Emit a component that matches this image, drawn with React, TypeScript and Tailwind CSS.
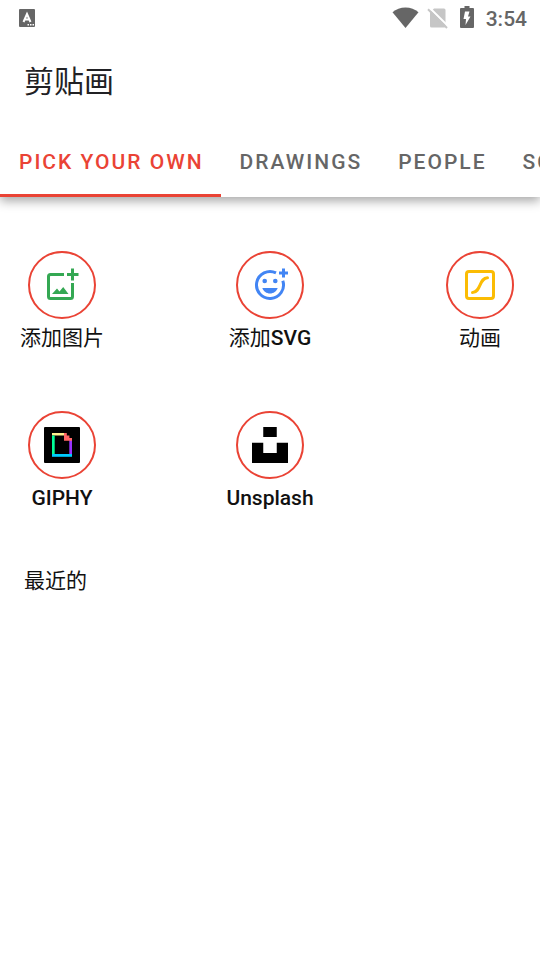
import type { ReactNode } from "react";
import clsx from "clsx";

const TABS = ["PICK YOUR OWN", "DRAWINGS", "PEOPLE", "SCIENCE"];

function StatusBar() {
  return (
    <div className="flex h-9 items-center justify-between pl-[19px] pr-3 text-[#666666]">
      <svg width="16" height="18" viewBox="0 0 16 18">
        <rect width="16" height="18" rx="1" fill="currentColor" />
        <path d="M4.5 13 8 5l3.5 8M5.8 10.5h4.4" fill="none" stroke="#fff" strokeWidth="2" />
        <path d="M8.500 15h1.500v1.500H8.500zM11 15h1.500v1.500H11zM13.500 15H15v1.500h-1.500z" fill="#fff" />
      </svg>
      <div className="flex items-center">
        <svg width="28" height="22" viewBox="0 0 28 22">
          <path d="M13.500 21 .5 5.200C4 2.200 8.500.5 13.500.5s9.500 1.700 13 4.700z" fill="currentColor" />
        </svg>
        <svg className="ml-1.5" width="24" height="24" viewBox="0 0 24 24">
          <path d="M8 2.500h10A1.500 1.500 0 0 1 19.500 4v16a1.500 1.500 0 0 1-1.500 1.500H5.500A1.500 1.500 0 0 1 4 20V6.500z" fill="#c6c6c6" />
          <path d="M3.500 1.800 22.500 20.500" stroke="#fff" strokeWidth="2" />
          <path d="M2 3.200 21 22" stroke="#c6c6c6" strokeWidth="2" />
        </svg>
        <svg className="mb-0.5 ml-2.5" width="14" height="22" viewBox="0 0 14 22">
          <path d="M4.500 0h5v2H13a1 1 0 0 1 1 1v18a1 1 0 0 1-1 1H1a1 1 0 0 1-1-1V3a1 1 0 0 1 1-1h3.500z" fill="currentColor" />
          <path d="M9.500 5.500H5L3.500 13H6l-.5 6L10.500 10.500H8z" fill="#fff" />
        </svg>
        <span className="ml-3 pr-px pt-0.5 text-[21px] leading-6 font-medium">3:54</span>
      </div>
    </div>
  );
}

function AddImageIcon() {
  return (
    <svg width="36" height="36" viewBox="0 0 36 36" fill="none" stroke="#34a853" strokeWidth="3">
      <path d="M20 7.500H6.500a2 2 0 0 0-2 2v20a2 2 0 0 0 2 2h20a2 2 0 0 0 2-2V16" />
      <path d="M23 7.500h11.500M28.500 1.500v12" />
      <path d="m8 27 5-5.500 2.500 3 3.700-4.500L24.500 27z" fill="#34a853" stroke="none" />
    </svg>
  );
}

function AddSmileIcon() {
  return (
    <svg width="36" height="36" viewBox="0 0 36 36" fill="#4285f4">
      <path d="M24 5.900A13.500 13.500 0 1 0 30.800 13.700" fill="none" stroke="#4285f4" strokeWidth="3" />
      <path d="M27 6h9M31.500 1.500v9" stroke="#4285f4" strokeWidth="3" />
      <circle cx="12.700" cy="14" r="2.300" />
      <circle cx="23.300" cy="14" r="2.300" />
      <path d="M10.300 21h15.400c-1.200 3.300-4.200 5.500-7.700 5.500s-6.500-2.200-7.700-5.500z" />
    </svg>
  );
}

function AnimationIcon() {
  return (
    <svg width="36" height="36" viewBox="0 0 36 36" fill="none" stroke="#fbbc04" strokeWidth="3">
      <rect x="4.500" y="4.500" width="27" height="27" rx="2.500" />
      <path d="M10.500 25.500C19 25.500 17 10.700 25.500 10.700" strokeLinecap="round" />
    </svg>
  );
}

function GiphyIcon() {
  return (
    <svg width="36" height="36" viewBox="0 0 36 36">
      <rect width="36" height="36" rx="1" />
      <path d="M8 6h12v2.500H8z" fill="#fff191" />
      <path d="M8 8.500h2.700V28H8z" fill="#00ff99" />
      <path d="M25.300 13H28v14h-2.700z" fill="#9933ff" />
      <path d="M8 27h20v2.800H8z" fill="#00ccff" />
      <path d="M20 6h2.800v2.500h2.600V11H28v2.700h-8z" fill="#ff6666" />
    </svg>
  );
}

function UnsplashIcon() {
  return (
    <svg width="36" height="36" viewBox="0 0 36 36">
      <path d="M11.250 0h13.500v10.100h-13.500zM24.750 15.750H36V36H0V15.750h11.250v10.150h13.500z" />
    </svg>
  );
}

function Source({ label, children }: { label: ReactNode; children: ReactNode }) {
  return (
    <button className="flex flex-col items-center whitespace-nowrap text-[21px] leading-6 text-[#111111]">
      <span className="mb-[7px] flex size-[68px] items-center justify-center rounded-full border-2 border-[#ea4335]">
        {children}
      </span>
      <span>{label}</span>
    </button>
  );
}

export default function App() {
  return (
    <div className="min-h-screen overflow-hidden bg-white font-[Roboto,'Noto_Sans_CJK_SC',sans-serif]">
      <header className="bg-white shadow-[0_4px_10px_rgba(0,0,0,0.35)]">
        <StatusBar />
        <h1 className="flex h-[90px] items-center px-6 pt-0.5 text-[30px] leading-10 text-[#212124]">剪贴画</h1>
        <nav className="flex h-[71px] overflow-hidden" role="tablist">
          {TABS.map((tab, i) => (
            <button
              key={tab}
              role="tab"
              aria-selected={i === 0}
              className={clsx(
                "shrink-0 border-b-[3px] pl-[19px] pr-[17px] pt-[3px] text-[21px] leading-6 font-medium tracking-[2px]",
                i === 0 ? "border-[#ea4335] text-[#ea4335]" : "border-transparent text-[#666666]"
              )}
            >
              {tab}
            </button>
          ))}
        </nav>
      </header>

      <main className="pt-[54px]">
        <div className="grid grid-cols-[84px_84px_88px] justify-between gap-y-[61px] pl-5 pr-4">
          <Source label="添加图片">
            <AddImageIcon />
          </Source>
          <Source label={<>添加<span className="font-medium">SVG</span></>}>
            <AddSmileIcon />
          </Source>
          <Source label="动画">
            <AnimationIcon />
          </Source>
          <Source label={<span className="font-medium">GIPHY</span>}>
            <GiphyIcon />
          </Source>
          <Source label={<span className="font-medium">Unsplash</span>}>
            <UnsplashIcon />
          </Source>
        </div>
        <h2 className="mt-[59px] px-6 text-[21px] leading-6 text-[#111111]">最近的</h2>
      </main>
    </div>
  );
}
